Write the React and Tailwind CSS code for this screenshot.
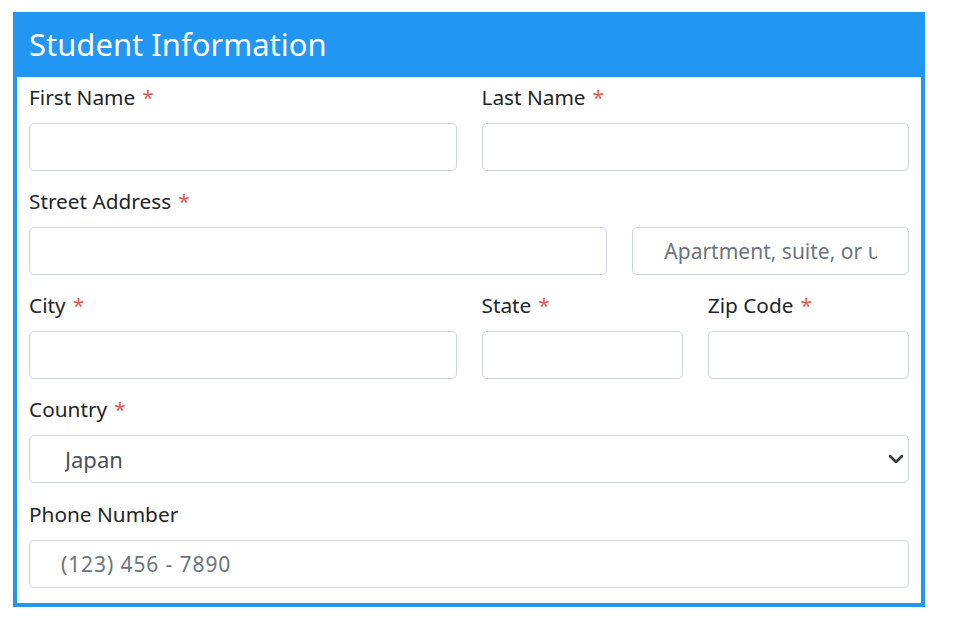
import { ChevronDown } from 'lucide-react';

const font = { fontFamily: '"Noto Sans", "Open Sans", sans-serif' };

function Label({ text, required }) {
  return (
    <label className="block h-[30px] mb-[11px] text-[20.8px] leading-[30px] text-[#212529]">
      {text}
      {required && <span className="ml-[7px] text-[#e4584c]">*</span>}
    </label>
  );
}

function Field({ label, required, placeholder, span, extra = '' }) {
  return (
    <div className={span}>
      {label ? <Label text={label} required={required} /> : <div className="h-[30px] mb-[11px]" />}
      <input
        type="text"
        placeholder={placeholder}
        className={`w-full h-[48px] px-[31px] text-[21px] text-[#495057] placeholder:text-[#6c757d] bg-white border border-[#ced4da] rounded-[5px] outline-none ${extra}`}
      />
    </div>
  );
}

export default function App() {
  return (
    <div className="w-[953px] h-[618px] bg-white pt-[12px] pl-[13px]" style={font}>
      <div className="w-[912px] border-4 border-t-0 border-[#2196f3]">
        <div className="h-[65px] bg-[#2196f3] px-[12px] flex items-center pb-[1px]">
          <h1 className="text-[31px] text-white leading-none">Student Information</h1>
        </div>
        <div className="px-[12px] pt-[5px] pb-[15px] grid grid-cols-12 gap-x-[25px] gap-y-[15px]">
          <Field label="First Name" required span="col-span-6" />
          <Field label="Last Name" required span="col-span-6" />
          <Field label="Street Address" required span="col-span-8" />
          <Field placeholder="Apartment, suite, or unit" span="col-span-4" />
          <Field label="City" required span="col-span-6" />
          <Field label="State" required span="col-span-3" />
          <Field label="Zip Code" required span="col-span-3" />
          <div className="col-span-12">
            <Label text="Country" required />
            <div className="relative">
              <select
                defaultValue="Japan"
                className="w-full h-[48px] pl-[35px] pr-[40px] text-[22px] text-[#495057] bg-white border border-[#ced4da] rounded-[5px] appearance-none outline-none"
              >
                <option>United States</option>
                <option>Canada</option>
                <option>Japan</option>
              </select>
              <ChevronDown className="absolute right-[1px] top-[12px] w-6 h-6 text-[#343a40] pointer-events-none" strokeWidth={2.5} />
            </div>
          </div>
          <Field label="Phone Number" placeholder="(123) 456 - 7890" span="col-span-12 mt-[1px]" extra="tracking-[0.9px]" />
        </div>
      </div>
    </div>
  );
}
